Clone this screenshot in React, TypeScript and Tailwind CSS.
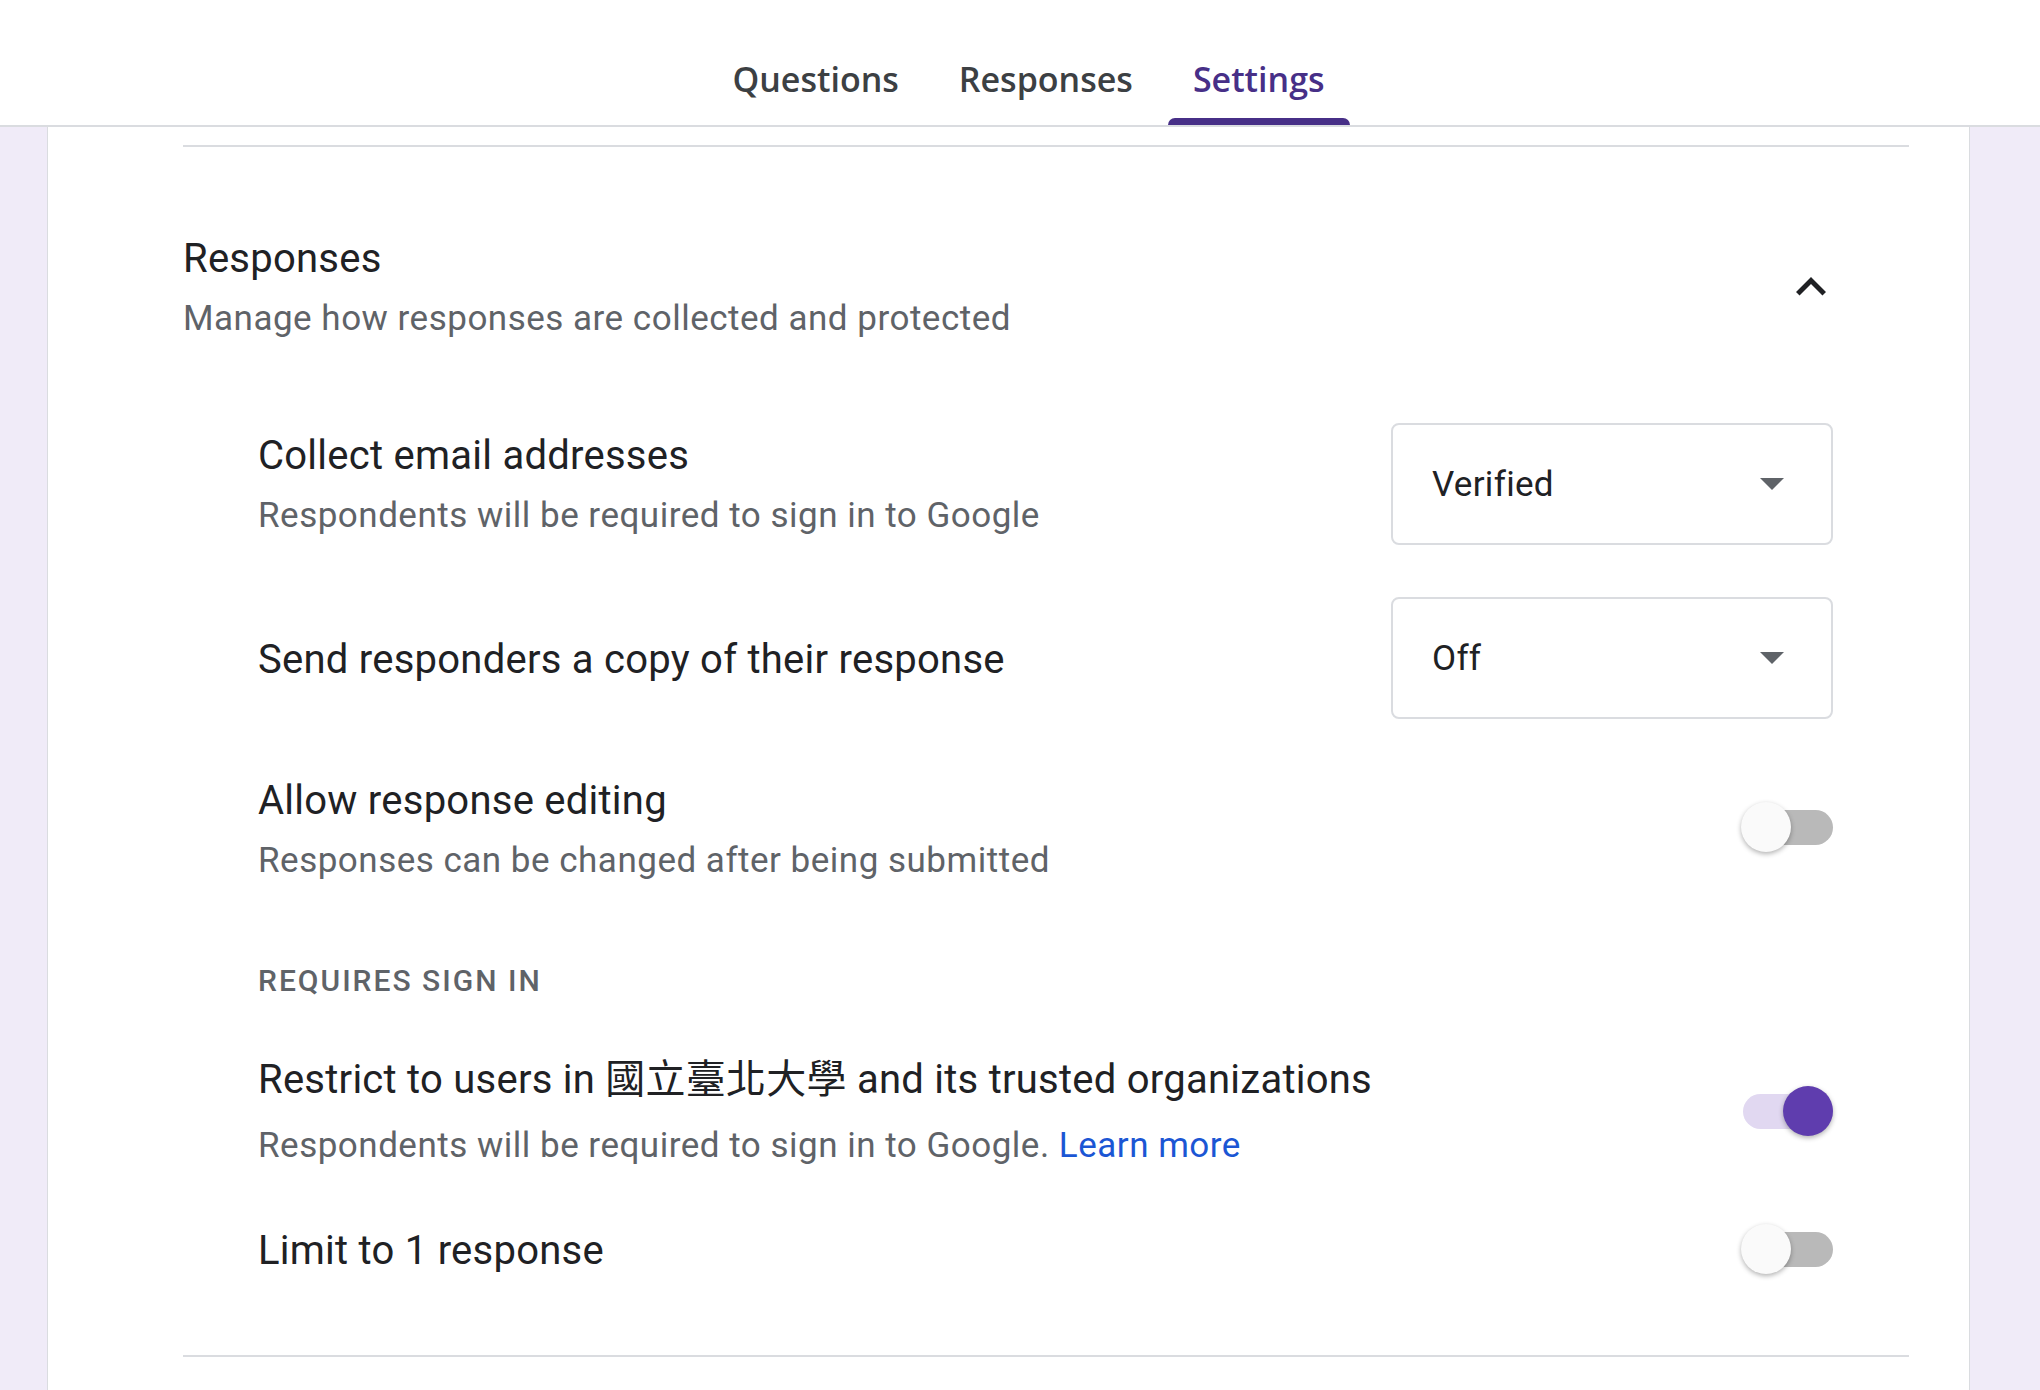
import React from "react";

const body = "font-['Roboto','Noto_Sans_CJK_TC',sans-serif]";

function Tab({ label, active }: { label: string; active?: boolean }) {
  return (
    <div className="flex h-full flex-col">
      <div
        className={`flex flex-1 items-center px-[25px] pt-[40px] font-['Open_Sans',sans-serif] text-[34px] font-semibold leading-[48px] ${
          active ? "text-[#472f87]" : "text-[#3c4043]"
        }`}
      >
        {label}
      </div>
      <div className={`h-[7px] rounded-t-[7px] ${active ? "bg-[#472f87]" : "bg-transparent"}`} />
    </div>
  );
}

function Dropdown({ value }: { value: string }) {
  return (
    <div className="flex h-[122px] w-[442px] shrink-0 items-center justify-between rounded-[8px] border-2 border-[#dadce0] pl-[39px] pr-[47px]">
      <span className="pt-[1px] text-[35px] leading-[48px] tracking-[0.3px] text-[#202124]">{value}</span>
      <svg width="24" height="12" viewBox="0 0 24 12">
        <polygon points="0,0 24,0 12,12" fill="#5f6368" />
      </svg>
    </div>
  );
}

function Toggle({ on }: { on?: boolean }) {
  return (
    <div className="relative flex h-[50px] w-[92px] shrink-0 items-center justify-end">
      <div className={`h-[35px] w-[90px] rounded-full ${on ? "bg-[#e1d8f1]" : "bg-[#b9b9b9]"}`} />
      <div
        className={`absolute top-0 h-[50px] w-[50px] rounded-full shadow-[0_2px_5px_rgba(0,0,0,0.3)] ${
          on ? "right-0 bg-[#5f3dae]" : "left-0 bg-[#fafafa]"
        }`}
      />
    </div>
  );
}

function Title({ children }: { children: React.ReactNode }) {
  return <div className="text-[40px] leading-[48px] tracking-[0.25px] text-[#202124]">{children}</div>;
}

function Sub({ children, className = "" }: { children: React.ReactNode; className?: string }) {
  return (
    <div className={`text-[35px] leading-[48px] tracking-[0.5px] text-[#5f6368] ${className}`}>{children}</div>
  );
}

export default function App() {
  return (
    <div className={`flex h-[1390px] flex-col overflow-hidden bg-white ${body}`}>
      {/* top tabs */}
      <div className="h-[127px] shrink-0 border-b-2 border-[#dadce0] bg-white">
        <div className="flex h-full justify-center gap-[10px] pl-[17px]">
          <Tab label="Questions" />
          <Tab label="Responses" />
          <Tab label="Settings" active />
        </div>
      </div>

      <div className="flex flex-1 bg-[#f0ebf8] pl-[47px] pr-[70px]">
        <div className="flex-1 border-x border-[#dadce0] bg-white pl-[135px] pr-[60px] pt-[18px]">
          <div className="h-[2px] bg-[#dadce0]" />

          <div className="mt-[84px] flex items-center justify-between pr-[68px]">
            <div className="pt-[4px]">
              <Title>Responses</Title>
              <Sub className="mt-[12px]">Manage how responses are collected and protected</Sub>
            </div>
            <svg width="60" height="60" viewBox="0 0 24 24" fill="#202124">
              <path d="M7.41 15.41L12 10.83l4.59 4.58L18 14l-6-6-6 6z" />
            </svg>
          </div>

          <div className="pl-[75px] pr-[76px]">
            <div className="mt-[80px] flex items-center justify-between">
              <div className="pt-[4px]">
                <Title>Collect email addresses</Title>
                <Sub className="mt-[12px]">Respondents will be required to sign in to Google</Sub>
              </div>
              <Dropdown value="Verified" />
            </div>

            <div className="mt-[52px] flex items-center justify-between">
              <div className="pt-[4px]">
                <Title>Send responders a copy of their response</Title>
              </div>
              <Dropdown value="Off" />
            </div>

            <div className="mt-[54px] flex items-center justify-between">
              <div className="pt-[4px]">
                <Title>Allow response editing</Title>
                <Sub className="mt-[12px]">Responses can be changed after being submitted</Sub>
              </div>
              <div className="pb-[4px]">
                <Toggle />
              </div>
            </div>

            <div className="mt-[76px] text-[30px] font-medium uppercase leading-[40px] tracking-[2px] text-[#5f6368]">
              Requires sign in
            </div>

            <div className="mt-[51px] flex items-center justify-between">
              <div className="pt-[4px]">
                <Title>Restrict to users in 國立臺北大學 and its trusted organizations</Title>
                <Sub className="mt-[18px]">
                  Respondents will be required to sign in to Google.{" "}
                  <span className="text-[#1b56d4]">Learn more</span>
                </Sub>
              </div>
              <Toggle on />
            </div>

            <div className="mt-[53px] flex items-center justify-between">
              <div className="pt-[4px]">
                <Title>Limit to 1 response</Title>
              </div>
              <Toggle />
            </div>
          </div>

          <div className="mt-[80px] h-[2px] bg-[#dadce0]" />
        </div>
      </div>
    </div>
  );
}
